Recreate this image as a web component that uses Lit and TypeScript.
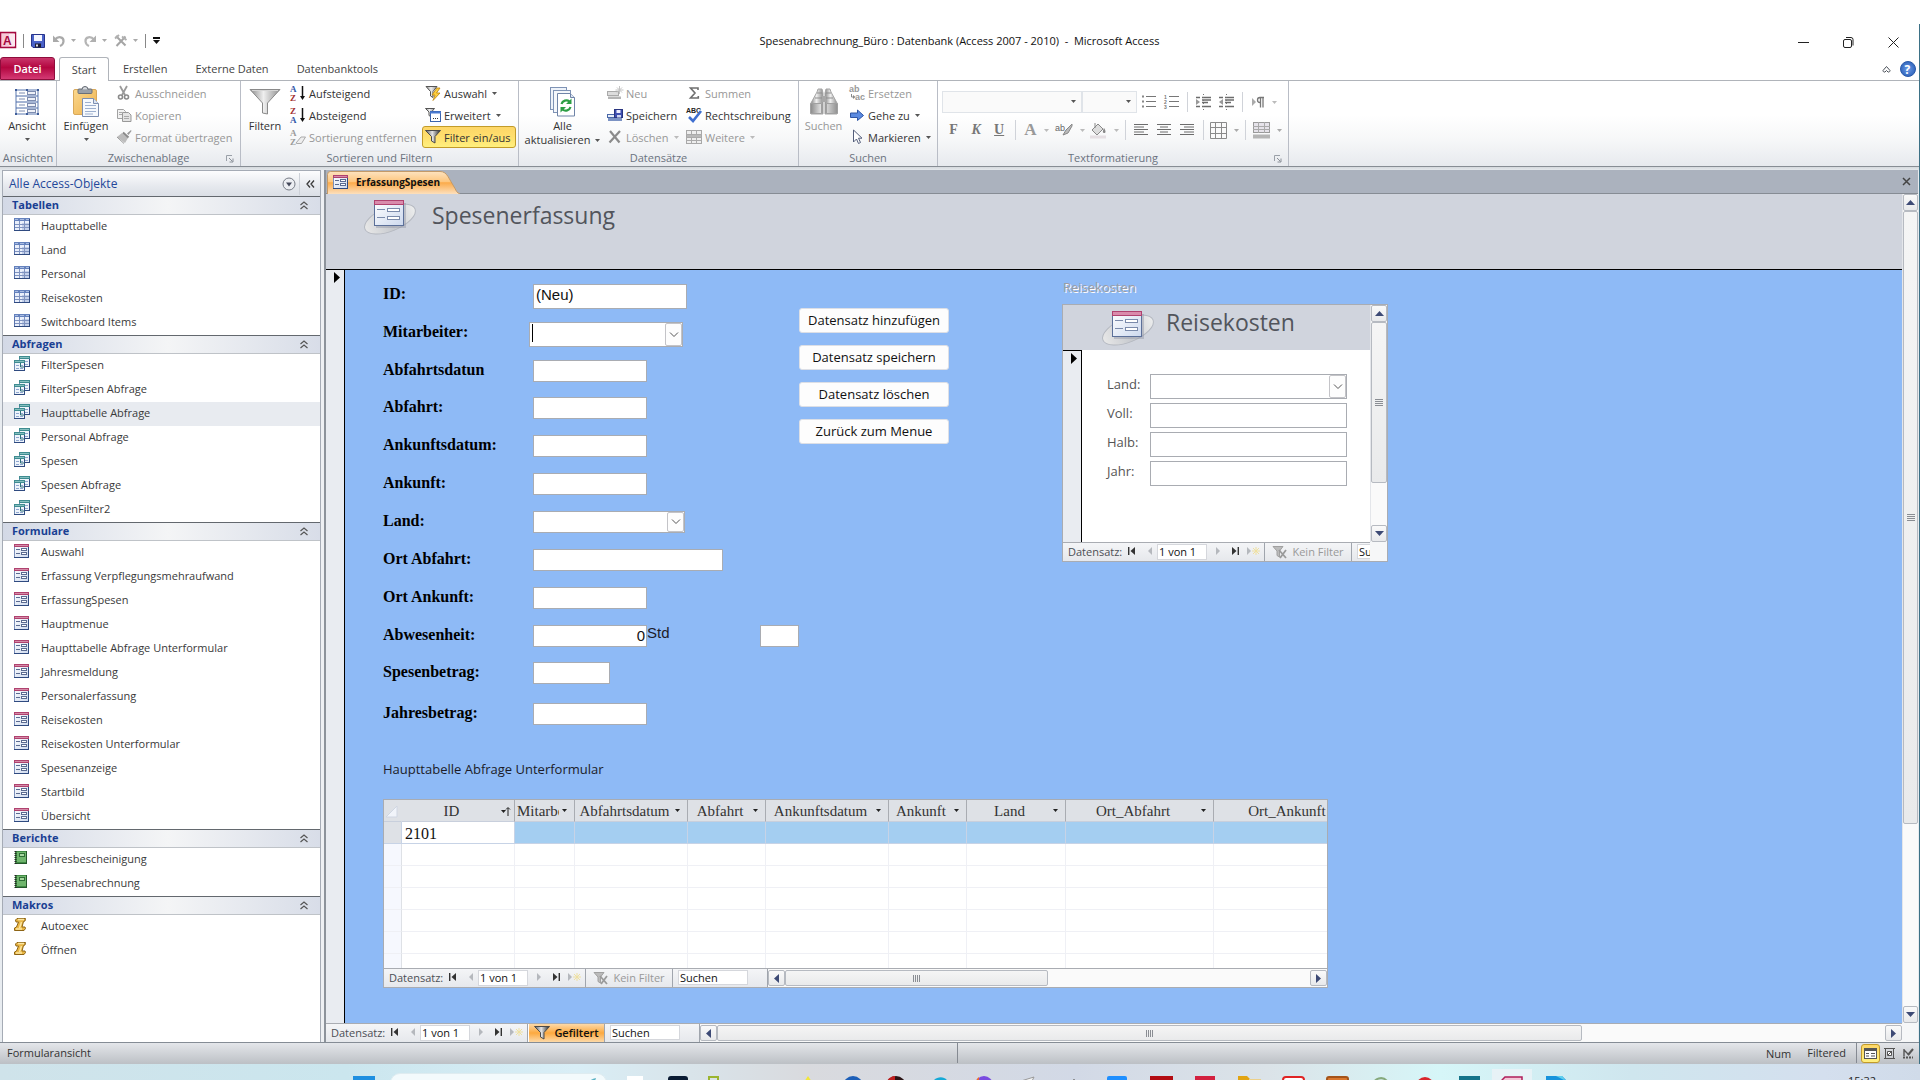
import { LitElement, html, svg, css, nothing } from "lit";
import { customElement } from "lit/decorators.js";
import { classMap } from "lit/directives/class-map.js";
import { styleMap } from "lit/directives/style-map.js";

type Icon = unknown;
const draw = (w: number, h: number, body: unknown): Icon =>
  html`<svg class="ic" width=${w} height=${h} viewBox="0 0 ${w} ${h}" aria-hidden="true">${body}</svg>`;

/* ---------- navigation pane icons ---------- */
const iconTable = draw(16, 16, svg`<rect x="0.5" y="1.5" width="15" height="12" fill="#e9effb" stroke="#5a74ad"/>
  <rect x="0" y="1" width="16" height="3" fill="#6582bd"/><path d="M8 6h8v8H8z" fill="#c3d0ea"/>
  <path d="M1 7.500h14M1 10.500h14M5.500 4v10M10.500 4v10" stroke="#7f93c0"/><path d="M1 2.500h3M6 2.500h4M12 2.500h3" stroke="#a9bce2"/>
  <path d="M0 13.500h16M15.500 2v12" stroke="#2f4a80"/>`);
const iconQuery = draw(16, 16, svg`<rect x="5.5" y="0.5" width="10" height="10" fill="#eef4fb" stroke="#6f8bb0"/><rect x="5" y="0" width="11" height="3" fill="#3f8c91"/><path d="M6 1.500h9" stroke="#86c0c0"/>
  <path d="M7 5.500h3M11 5.500h3M7 8.500h3M11 8.500h3" stroke="#8fa6cf"/><path d="M5 10.500h11M15.500 3v8" stroke="#2f4a80"/>
  <rect x="0.5" y="4.5" width="10" height="10" fill="#eef4fb" stroke="#6f8bb0"/><rect x="0" y="4" width="11" height="3" fill="#3f8c91"/><path d="M1 5.500h9" stroke="#86c0c0"/>
  <path d="M2 9.500h3M6 9.500h3M2 12.500h3M6 12.500h3" stroke="#8fa6cf"/><path d="M0 14.500h11M10.500 7v8" stroke="#2f4a80"/><path d="M6.500 7v4h4" stroke="#2d6f78" fill="none"/>`);
const formGlyph = svg`<rect x="0.5" y="1.5" width="14" height="13" fill="url(#gForm)" stroke="#7a8fba"/>
  <rect x="0" y="1" width="15" height="3" fill="#b0426f"/><path d="M1 2.500h13" stroke="#d58ba8"/>
  <path d="M2 6.500h4M2 10.500h4" stroke="#5b6b91"/><rect x="7.500" y="5.500" width="5" height="2" fill="#fff" stroke="#5b6b91"/>
  <rect x="7.500" y="9.500" width="5" height="2" fill="#fff" stroke="#5b6b91"/><path d="M0 14.500h15M14.500 4v11" stroke="#2f4a80"/>`;
const iconForm = draw(16, 16, formGlyph);
const iconReport = draw(16, 16, svg`<rect x="1" y="1" width="12" height="13" fill="#3f8a43"/><path d="M3 2h9v10H3z" fill="#6fb56c"/>
  <rect x="5.500" y="3.500" width="5" height="3" fill="#a7d6a0" stroke="#2f6e35"/><path d="M12.500 1v13M1 13.500h12" stroke="#25572b"/>
  <path d="M1.500 1v13" stroke="#222" stroke-width="2" stroke-dasharray="1 1"/>`);
const iconMacro = draw(16, 16, svg`<path d="M3 1.500h8.500l-.500 2.500-1.500 0.500L8 10h3l.500 1.500-1.500 2H.500V11L2.500 10 4.500 5H2L1.500 3z" fill="#e9b644" stroke="#8d6415"/>
  <path d="M4 2.500h6M7.500 5l-2 6M2 12h6" stroke="#fbe6a2" fill="none" stroke-width="1.500"/>`);

/* ---------- ribbon icons ---------- */
const iconView = draw(26, 28, svg`<rect x="2" y="2" width="22" height="24" fill="#fff" stroke="#5a78b0"/>
  <path d="M2 8h22M2 14h22M2 20h22" stroke="#4a6aa8"/>
  <path d="M5 5h6M5 11h6M5 17h6M5 23h6" stroke="#7d8cb0"/>
  <g fill="#eef1f8" stroke="#7d8cb0"><rect x="13.500" y="3.500" width="8" height="3"/><rect x="13.500" y="9.500" width="8" height="3"/><rect x="13.500" y="15.500" width="8" height="3"/><rect x="13.500" y="21.500" width="8" height="3"/></g>
  <g fill="#3d5c99"><rect x="1" y="1" width="2" height="2"/><rect x="12" y="1" width="2" height="2"/><rect x="23" y="1" width="2" height="2"/><rect x="1" y="25" width="2" height="2"/><rect x="12" y="25" width="2" height="2"/><rect x="23" y="25" width="2" height="2"/></g>`);
const iconPaste = draw(28, 32, svg`<rect x="1.500" y="3.500" width="23" height="25" rx="1.500" fill="url(#gClip)" stroke="#d9a95a"/>
  <rect x="6" y="3" width="14" height="4.500" rx="1" fill="#9aa0a8" stroke="#6a7079"/><path d="M10 3.500a3 3 0 0 1 6 0" fill="#d8dbe0" stroke="#5e646d"/>
  <path d="M10.500 12.500h11l5 5v13h-16z" fill="#f6f9fd" stroke="#7d8fb0"/><path d="M21.500 12.500v5h5" fill="#dce5f3" stroke="#7d8fb0"/>
  <path d="M13 16.500h6M13 19.500h11M13 22.500h11M13 25.500h11M13 28h8" stroke="#9db0cf"/>`);
const iconCut = draw(16, 16, svg`<path d="M4 1l5 9M11 1L6 10" stroke="#9a9a9a" stroke-width="1.800" fill="none"/><circle cx="4.500" cy="12" r="2" fill="none" stroke="#8a8a8a" stroke-width="1.600"/><circle cx="10.500" cy="12" r="2" fill="none" stroke="#8a8a8a" stroke-width="1.600"/>`);
const iconCopy = draw(16, 16, svg`<path d="M1.500 2.500h6l2 2v7h-8z" fill="#f2f2f2" stroke="#a2a2a2"/><path d="M6.500 5.500h6l2.500 2.500v6.500H6.500z" fill="#e4e4e4" stroke="#999"/><path d="M3 5.500h3M3 7.500h3M8 9.500h5M8 11.500h5" stroke="#aaa"/>`);
const iconBrush = draw(16, 16, svg`<path d="M15 1l-4 3.500 1.500 1.500L15.500 2z" fill="#999"/><path d="M6 4l6 5-3 5-8-6z" fill="#bcbcbc"/><path d="M7 3.500l5.500 5" stroke="#8a8a8a" stroke-width="2"/><path d="M1 8l7 6.500" stroke="#9a9a9a"/>`);
const iconFunnelBig = draw(32, 28, svg`<path d="M1 1.500h30L18.500 15v11l-5-1V15z" fill="url(#gMetal)" stroke="#8a8a8a"/><path d="M3 2.500h26" stroke="#d6d6d6"/>`);
const sortIcon = (a: string, b: string, ca: string, cb: string) => draw(16, 18, svg`<text x="0" y="8" class="az" fill=${ca}>${a}</text><text x="0" y="17" class="az" fill=${cb}>${b}</text><path d="M12.500 2v12" stroke="#111" stroke-width="1.500"/><path d="M10 12h5l-2.500 4z" fill="#111"/>`);
const iconSortClear = draw(16, 18, svg`<text x="0" y="8" class="az" fill="#9b9b9b">A</text><text x="0" y="17" class="az" fill="#9b9b9b">Z</text><path d="M6 15l5-6h4.500l-4 6.500H7z" fill="#eee" stroke="#aaa"/>`);
const iconSelect = draw(16, 16, svg`<path d="M1 1.500h11L8 6.500v6L5.500 11V6.500z" fill="url(#gMetal)" stroke="#555"/><path d="M12 3L7 10h3l-2 5.500L15 8h-3.500L15 3z" fill="#ffcf3c" stroke="#b8820e" stroke-width="0.800"/>`);
const iconAdvanced = draw(16, 16, svg`<path d="M0.500 1.500h9L6.500 5v5L4 8.500V5z" fill="url(#gMetal)" stroke="#555"/><rect x="5.500" y="4.500" width="10" height="10" fill="#fff" stroke="#3b64ad"/><path d="M5 5.500h11" stroke="#4a7ad0" stroke-width="2"/><path d="M8 11.500h1M10 11.500h1M12 11.500h1" stroke="#333"/>`);
const iconToggle = draw(16, 16, svg`<path d="M0.500 1.500h15L10 7.500V14l-3.500-2V7.500z" fill="url(#gDark)" stroke="#4b4b4b"/>`);
const iconRefresh = draw(28, 32, svg`<rect x="1.500" y="1.500" width="16" height="22" fill="#eef3fa" stroke="#7f93b5"/><rect x="4.500" y="4.500" width="17" height="22" fill="#f4f7fb" stroke="#7f93b5"/>
  <path d="M8.500 7.500h13l4 4V30h-17z" fill="#fff" stroke="#6f84a8"/><path d="M21.500 7.500v4h4" fill="#dfe7f3" stroke="#6f84a8"/>
  <path d="M12.500 18a5 5 0 0 1 8-2.500M21.500 21a5 5 0 0 1-8 2.500" fill="none" stroke="#2c9e44" stroke-width="2.200"/><path d="M22.500 12.500v5.500h-5.500zM11.500 26.500v-5.500H17z" fill="#2c9e44"/>`);
const iconNew = draw(16, 16, svg`<rect x="0.500" y="6.500" width="11" height="4" fill="#ddd" stroke="#aaa"/><path d="M1 11.500h13V14H1z" fill="#b5b5b5"/><path d="M12.500 1v8M8.500 5h8M10 2.500l5 5M15 2.500l-5 5" stroke="#c4c4c4"/>`);
const iconSave = draw(16, 16, svg`<rect x="0.500" y="7.500" width="11" height="3" fill="#e8eefa" stroke="#4a68a8"/><path d="M1 11h14v3H1z" fill="#7c93c4"/><rect x="7.500" y="2.500" width="8" height="8" fill="#3f4fb0" stroke="#2a3580"/><path d="M9.500 3h4v3h-4z" fill="#eef"/><path d="M10 8h4v2.500h-4z" fill="#cfd6f0"/>`);
const iconDelete = draw(16, 16, svg`<path d="M3 2l9.500 11.500M13 2L2.500 13.500" stroke="#8b8b8b" stroke-width="2.200" fill="none"/>`);
const iconSum = draw(16, 16, svg`<path d="M12 5V3H4.500L9 8l-4.500 5H12.300V11" fill="none" stroke="#6f6f6f" stroke-width="1.600"/>`);
const iconSpell = draw(16, 16, svg`<text x="0" y="6" class="abc">ABC</text><path d="M3 10l4 4 8-10" fill="none" stroke="#3f6fd0" stroke-width="2.600"/>`);
const iconMore = draw(16, 16, svg`<rect x="0.500" y="1.500" width="15" height="13" fill="#eee" stroke="#a8a8a8"/><path d="M0 5.500h16M0 8.500h16M0 11.500h16M5.500 1v14M10.500 1v14" stroke="#aaa"/><path d="M1 6h14v2H1z" fill="#b8b8b8"/>`);
const iconFind = draw(30, 28, svg`<path d="M8 4l1-3h4l1 4v21H2V15z" fill="url(#gMetal)" stroke="#a5a5a5"/><path d="M22 4l-1-3h-4l-1 4v21h12V15z" fill="url(#gMetal)" stroke="#a5a5a5"/>
  <path d="M1.500 15.500h11v10h-11zM17.500 15.500h11v10h-11z" fill="url(#gMetal)" stroke="#a0a0a0"/><path d="M8 5h5M17 5h5M6 10h7M17 10h7" stroke="#8f8f8f"/><rect x="13" y="8" width="4" height="6" fill="#a8a8a8"/>`);
const iconReplace = draw(16, 16, svg`<text x="0" y="7" class="ab">ab</text><text x="6" y="15" class="ab">ac</text><path d="M2.500 9v3H5" stroke="#888" fill="none"/><path d="M4 10l2.500 2L4 14z" fill="#888"/>`);
const iconGo = draw(16, 16, svg`<path d="M1.500 6h7V3L14.500 8.500 8.500 13.500v-3h-7z" fill="#5b8ae0" stroke="#2f55a4"/>`);
const iconCursor = draw(16, 16, svg`<path d="M4.500 1v12l3-3 2 4.500 2-1-2-4.300h3.500z" fill="#fff" stroke="#555f7c"/>`);
const iconBullets = draw(16, 16, svg`<path d="M5 2.500h10M5 7.500h10M5 12.500h10" stroke="#777"/><g fill="#888"><rect x="1" y="1.500" width="2" height="2"/><rect x="1" y="6.500" width="2" height="2"/><rect x="1" y="11.500" width="2" height="2"/></g>`);
const iconNumbers = draw(16, 16, svg`<path d="M5 2.500h10M5 7.500h10M5 12.500h10" stroke="#777"/><g class="num"><text x="0" y="5">1</text><text x="0" y="10">2</text><text x="0" y="15">3</text></g>`);
const indentIcon = (left: boolean) => draw(17, 16, svg`<path d="M7 3.500h9M7 6h9M7 8.500h6M7 12.500h9M1 3.500h4M1 12.500h4" stroke="#6c6c6c" stroke-width="1.300"/><path d="M8.500 0v16" stroke="#777" stroke-dasharray="1 2"/><path d=${left ? "M5 5v6L1 8z" : "M1 5v6l4-3z"} fill="#999"/>`);
const iconPara = draw(14, 16, svg`<path d="M1 4v8l4-4z" fill="#aaa"/><path d="M13 3.500H9a2.500 2.500 0 0 0 0 5M9.500 4v9.500M12 4v9.500" fill="none" stroke="#777" stroke-width="1.300"/>`);
const iconHighlight = draw(18, 16, svg`<text x="0" y="9" class="hl">ab</text><path d="M17 2l-6 6-3 5 5-2 4-7z" fill="#bbb" stroke="#888"/>`);
const iconBucket = draw(18, 18, svg`<path d="M3 9l6-6 5 5-6 6z" fill="#ddd" stroke="#888"/><path d="M6 2v5" stroke="#888"/><path d="M15 7c2 3 2 5 0 5s-1-3 0-5" fill="#888"/><path d="M1 16h16" stroke="#e5dfe3" stroke-width="3"/>`);
const alignIcon = (xs: number[][]) => draw(16, 14, svg`${xs.map((r, i) => svg`<path d="M${r[0]} ${i * 2.5 + 1.5}H${r[1]}" stroke="#6c6c6c"/>`)}`);
const iconAlignL = alignIcon([[1, 15], [1, 11], [1, 15], [1, 11], [1, 15]]);
const iconAlignC = alignIcon([[1, 15], [4, 12], [1, 15], [4, 12], [1, 15]]);
const iconAlignR = alignIcon([[1, 15], [5, 15], [1, 15], [5, 15], [1, 15]]);
const iconGrid = draw(17, 17, svg`<path d="M.5.5h16v16H.5zM5.500.5v16M11.500.5v16M.5 5.500h16M.5 11.500h16" fill="#fafafa" stroke="#8a8a8a"/>`);
const iconAltRow = draw(17, 17, svg`<rect x="0.500" y="0.500" width="16" height="10" fill="#e6e3ea" stroke="#9a9a9a"/><path d="M0 4.500h17M0 7.500h17M5.500 0v11M11.500 0v11" stroke="#aaa"/><path d="M0 14.500h17" stroke="#b5b5b5" stroke-width="4"/>`);
const iconLauncher = draw(8, 8, svg`<path d="M.5 6V.5H6" fill="none" stroke="#9aa0a8"/><path d="M3 3l3.500 3.500M7 3.500V7H3.500" fill="none" stroke="#8a9098"/>`);

/* ---------- quick access icons ---------- */
const iconAccess = draw(16, 17, svg`<rect x="0.500" y="0.500" width="15" height="15" fill="#f7c9d9" stroke="#a4093f" stroke-width="1.500"/><path d="M9 2h6v12H9z" fill="#fbe7ee"/><text x="3" y="13" class="accA">A</text>`);
const iconDisk = draw(14, 14, svg`<path d="M.5.500h13v13H2l-1.500-1.500z" fill="#4a62c8" stroke="#27338b"/><path d="M3 1h8v6H3z" fill="#f4f6ff"/><path d="M4 9.500h6v4H4z" fill="#1c1c30"/><path d="M5 10.500h2v2H5z" fill="#dde"/>`);
const iconUndo = draw(14, 14, svg`<path d="M3 5.500C6 2 12 2.500 11.500 7.500c-.2 2-1 3.500-3.500 4.500" fill="none" stroke="#aaa" stroke-width="2.200"/><path d="M1 1.500V8h6.500z" fill="#aaa"/>`);
const iconRedo = draw(14, 14, svg`<path d="M11 5.500C8 2 2 2.500 2.500 7.500c.2 2 1 3.500 3.500 4.500" fill="none" stroke="#b5b5b5" stroke-width="2.200"/><path d="M13 1.500V8H6.500z" fill="#b0b0b0"/>`);
const iconTools = draw(14, 14, svg`<path d="M2 2l9.500 9.500M11.500 2.500L2.500 12" stroke="#a5a5a5" stroke-width="2"/><path d="M8 2.500l4.500 3.500M1 4.500L5 1" stroke="#b0b0b0" stroke-width="2"/>`);

/* ---------- small shapes ---------- */
const caret = (c = "#555") => draw(5, 3, svg`<path d="M0 0h5L2.500 3z" fill=${c}/>`);
const caretWide = draw(7, 4, svg`<path d="M0 0h7L3.500 4z" fill="#111"/>`);
const chevron = draw(10, 6, svg`<path d="M1 .5l4 4 4-4" fill="none" stroke="#555"/>`);
const dblUp = draw(8, 9, svg`<path d="M.5 4L4 1l3.500 3M.5 8L4 5l3.500 3" fill="none" stroke="#555" stroke-width="1.200"/>`);
const logo = draw(56, 38, svg`<ellipse cx="28" cy="21" rx="27" ry="12" transform="rotate(-22 28 21)" fill="url(#gEll)" stroke="#b4b8c0"/>
  <path d="M14 29h29V5" stroke="#8a8fa0" stroke-opacity="0.400" stroke-width="2" fill="none"/>
  <rect x="12.500" y="2.500" width="29" height="25" fill="url(#gForm)" stroke="#5c7099"/><rect x="12" y="2" width="30" height="5" fill="#b0426f"/><rect x="13" y="3" width="28" height="3" fill="#d98bab"/>
  <path d="M15 11.500h8M15 19.500h8" stroke="#7b8bab"/><rect x="25.500" y="10.500" width="12" height="3" fill="#fff" stroke="#7b8bab"/><rect x="25.500" y="18.500" width="12" height="3" fill="#fff" stroke="#7b8bab"/>`);
const noFilter = draw(16, 14, svg`<path d="M1 1.500h10L7.500 6v6L5 10.500V6z" fill="#bbb" stroke="#a0a0a0"/><path d="M7 5l7 8M14 5l-6 8" stroke="#9a9a9a" stroke-width="1.800"/>`);
const tri = (d: "up" | "down" | "left" | "right") =>
  draw(9, 9, svg`<path d=${{ up: "M0 7l4.500-5L9 7z", down: "M0 2l4.500 5L9 2z", left: "M7 0L2 4.500 7 9z", right: "M2 0l5 4.500L2 9z" }[d]} fill="#3d4a75"/>`);

const cmd = (icon: Icon, text: string, o: { off?: boolean; drop?: boolean; on?: boolean } = {}) => html`
  <button class=${classMap({ cmd: true, on: !!o.on })} ?disabled=${o.off}>${icon}<span>${text}</span>${o.drop ? caret(o.off ? "#bbb" : "#555") : nothing}</button>`;

const GROUPS: { title: string; icon: Icon; items: string[] }[] = [
  { title: "Tabellen", icon: iconTable, items: ["Haupttabelle", "Land", "Personal", "Reisekosten", "Switchboard Items"] },
  { title: "Abfragen", icon: iconQuery, items: ["FilterSpesen", "FilterSpesen Abfrage", "Haupttabelle Abfrage", "Personal Abfrage", "Spesen", "Spesen Abfrage", "SpesenFilter2"] },
  { title: "Formulare", icon: iconForm, items: ["Auswahl", "Erfassung Verpflegungsmehraufwand", "ErfassungSpesen", "Hauptmenue", "Haupttabelle Abfrage Unterformular", "Jahresmeldung", "Personalerfassung", "Reisekosten", "Reisekosten Unterformular", "Spesenanzeige", "Startbild", "Übersicht"] },
  { title: "Berichte", icon: iconReport, items: ["Jahresbescheinigung", "Spesenabrechnung"] },
  { title: "Makros", icon: iconMacro, items: ["Autoexec", "Öffnen"] },
];
const HOVERED = "Haupttabelle Abfrage";

type Field = { id: string; label: string; size: string; value?: string; combo?: boolean };
const FIELDS: Field[] = [
  { id: "id", label: "ID:", size: "tall", value: "(Neu)" },
  { id: "mitarbeiter", label: "Mitarbeiter:", size: "tall active", combo: true },
  { id: "abfahrtsdatum", label: "Abfahrtsdatun", size: "std" },
  { id: "abfahrt", label: "Abfahrt:", size: "std" },
  { id: "ankunftsdatum", label: "Ankunftsdatum:", size: "std" },
  { id: "ankunft", label: "Ankunft:", size: "std" },
  { id: "land", label: "Land:", size: "wide", combo: true },
  { id: "ortabfahrt", label: "Ort Abfahrt:", size: "long" },
  { id: "ortankunft", label: "Ort Ankunft:", size: "std" },
  { id: "abwesenheit", label: "Abwesenheit:", size: "std num", value: "0" },
  { id: "spesenbetrag", label: "Spesenbetrag:", size: "short" },
  { id: "jahresbetrag", label: "Jahresbetrag:", size: "std" },
];

const COLS: { name: string; w: number; sorted?: boolean }[] = [
  { name: "ID", w: 113, sorted: true }, { name: "Mitarbeiter", w: 60 }, { name: "Abfahrtsdatum", w: 113 }, { name: "Abfahrt", w: 78 },
  { name: "Ankunftsdatum", w: 123 }, { name: "Ankunft", w: 78 }, { name: "Land", w: 99 }, { name: "Ort_Abfahrt", w: 148 }, { name: "Ort_Ankunft", w: 160 },
];

/* Shapes of the taskbar programs, each drawn in a 24px tile */
const TASKS: unknown[] = [
  svg`<rect x="4" y="0" width="16" height="20" fill="#fff"/>`,
  svg`<rect x="1" y="0" width="20" height="20" rx="3" fill="#0a1b33"/>`,
  svg`<path d="M-2 12V1h9v11" fill="none" stroke="#9bb52f" stroke-width="2"/>`,
  nothing,
  svg`<path d="M5 6l4-6 4 6z" fill="#f2e63a"/>`,
  svg`<circle cx="10" cy="10" r="10" fill="#1d5fb8"/>`,
  svg`<circle cx="9" cy="10" r="10" fill="#2b1416"/><path d="M0 5a10 10 0 0 1 8-5v5z" fill="#c02020"/>`,
  svg`<path d="M0 12C0 0 14-2 17 6v6z" fill="#16a9d6"/>`,
  svg`<circle cx="9" cy="9" r="9" fill="#7a4be0"/><path d="M1 5a9 9 0 0 1 3-4v5z" fill="#f06a2a"/>`,
  svg`<path d="M2 5l13-4-3 6z" fill="#f4f4f4" stroke="#999"/>`,
  svg`<path d="M11 3v4" stroke="#777" stroke-width="1.500"/>`,
  svg`<rect x="0" y="0" width="20" height="20" rx="2" fill="#1f8fff"/>`,
  svg`<rect x="-1" y="0" width="23" height="20" fill="#b30c12"/>`,
  svg`<rect x="0" y="0" width="20" height="20" fill="#d3203f"/>`,
  svg`<path d="M-1 0h9l3 3h11v10H-1z" fill="#e2a411"/><path d="M10 3h12v6H10z" fill="#ecd089"/>`,
  svg`<rect x="0" y="1" width="21" height="20" rx="3" fill="#fff" stroke="#e02424" stroke-width="2"/>`,
  svg`<rect x="0" y="1" width="21" height="20" rx="2" fill="#d9772e" stroke="#a4541a" stroke-width="2"/>`,
  svg`<path d="M2 9a8 8 0 0 1 14-4" fill="none" stroke="#86a97c" stroke-width="2"/>`,
  svg`<circle cx="10" cy="10" r="9" fill="#d9252b"/>`,
  svg`<rect x="0" y="0" width="21" height="20" fill="#14748a"/>`,
  svg`<path d="M2 1h17v14H-1V4z" fill="#f3c6d7" stroke="#b01d5a" stroke-width="1.500"/><path d="M4 5h8v6H4z" fill="#b01d5a"/>`,
  svg`<path d="M-1 8V0h16l4 4v8H-1z" fill="#1793dc"/><path d="M9 0h6l4 5z" fill="#5fd0ee"/>`,
];

@customElement("app-root")
export class AppRoot extends LitElement {
  static styles = css`
    :host { display: flex; flex-direction: column; height: 100vh; min-height: 100vh; background: #fff; overflow: hidden;
      font-family: "Open Sans", "Noto Sans", sans-serif; font-size: 11px; color: #333; }
    * { box-sizing: border-box; }
    button, input, select { font: inherit; color: inherit; margin: 0; padding: 0; border: 0; background: none; border-radius: 0; outline: none; }
    input { min-width: 0; }
    .ic { display: block; flex: none; overflow: visible; }
    .defs { position: absolute; }
    .az { font: bold 9px "Liberation Serif", serif; }
    .abc { font: bold 7px "Liberation Sans", sans-serif; fill: #222; }
    .ab { font: bold 9px "Liberation Sans", sans-serif; fill: #999; }
    .num { font: bold 5px "Liberation Sans", sans-serif; fill: #777; }
    .hl { font: 9px "Liberation Sans", sans-serif; fill: #666; }
    .accA { font: bold 12px "Liberation Sans", sans-serif; fill: #a4093f; }

    .window { margin-top: 24px; flex: 1; min-height: 0; display: flex; flex-direction: column; border-right: 1px solid #3d7186; }

    /* title bar */
    .title { height: 33px; flex: none; display: grid; grid-template-columns: 1fr auto 1fr; align-items: center; padding-top: 5px; color: #111; }
    .title h1 { margin: 0; font-size: 11px; font-weight: 400; line-height: 16px; padding-bottom: 4px; white-space: pre; }
    .qat { display: flex; align-items: center; padding-bottom: 5px; gap: 7px; }
    .qat button { display: flex; align-items: center; gap: 5px; }
    .bar { width: 1px; height: 14px; background: #888; }
    .qat .custom { display: flex; flex-direction: column; align-items: center; border-top: 2px solid #111; padding-top: 1px; gap: 0; }
    .wins { display: flex; justify-content: flex-end; padding: 0 20px 1px 0; gap: 34px; }
    /* ribbon tabs */
    .tabs { height: 24px; flex: none; display: flex; align-items: stretch; border-bottom: 1px solid #b0b4ba; color: #444; }
    .tabs button { height: 24px; padding: 0 14px 1px; white-space: nowrap; }
    .tabs .file { width: 55px; height: 23px; padding: 0; color: #fff; font-weight: 600; background: linear-gradient(#c9346a, #b3063f 45%, #d43a74); border: 1px solid #8e0d3c; border-radius: 3px 3px 0 0; margin-right: 4px; }
    .tabs .sel { width: 50px; padding: 0; border: 1px solid #b0b4ba; border-bottom: 0; border-radius: 3px 3px 0 0; background: #fff; }
    .tabs .r { margin-left: auto; display: flex; align-items: center; gap: 9px; padding-right: 3px; }
    .tabs .r button { height: auto; padding: 0; }
    /* ribbon */
    .ribbon { height: 86px; flex: none; display: flex; border-bottom: 1px solid #878d94; background: linear-gradient(#fff 40%, #f6f7f8 70%, #e7eaee); }
    .grp { display: flex; flex-direction: column; border-right: 1px solid #b9bdc6; }
    .tools { height: 68px; padding-top: 1px; display: flex; }
    .cap { position: relative; text-align: center; line-height: 17px; color: #6b7380; }
    .cap .ic { position: absolute; right: 6px; bottom: 3px; }
    .g-view { width: 57px; } .g-clip { width: 184px; } .g-sort { width: 278px; } .g-data { width: 280px; } .g-find { width: 139px; } .g-text { width: 351px; }
    .col { display: flex; flex-direction: column; }
    .big { display: flex; flex-direction: column; align-items: center; padding-top: 3px; line-height: 14px; white-space: nowrap; }
    .big .pic { height: 34px; display: flex; align-items: center; }
    .big > .ic { margin-top: 5px; }
    .big .line { display: flex; align-items: center; gap: 5px; }
    .big:disabled, .cmd:disabled { color: #979797; }
    .cmd { height: 22px; display: flex; align-items: center; gap: 3px; padding-left: 1px; white-space: nowrap; text-align: left; }
    .cmd .ic + span + .ic { margin-left: 2px; }
    .cmd.on { border: 1px solid #c29b29; border-radius: 3px; background: linear-gradient(#fdd667, #ffdf6e 50%, #fff07e); margin-left: -2px; padding: 0 4px 0 2px; }
    .g-view .big { width: 54px; } .g-clip .big { width: 58px; } .g-sort .big { width: 48px; } .g-data .big { width: 87px; } .g-find .big { width: 49px; }
    .w132 { width: 135px; } .w81 { width: 79px; }
    .text { flex-direction: column; padding: 10px 4px 0 4px; }
    .trow { display: flex; align-items: center; height: 22px; color: #777; }
    .trow + .trow { margin-top: 6px; }
    .trow button { display: flex; align-items: center; justify-content: center; gap: 7px; height: 22px; }
    .trow .sep { width: 1px; height: 20px; margin: 0 4px; background: #d0d3d9; }
    .b22 { width: 23px; } .b35 { width: 34px; }
    .combo { position: relative; display: block; height: 22px; border: 1px solid #e0e4e9; background: #fafafa; }
    .combo select { appearance: none; width: 100%; height: 100%; }
    .combo .ic { position: absolute; right: 5px; top: 8px; pointer-events: none; }
    .f1 { width: 140px; } .f2 { width: 55px; }
    .serif { font: bold 14px "Liberation Serif", serif; } .serif.i { font-style: italic; } .serif.u { text-decoration: underline; } .serif.pale { color: #999; font-size: 17px; }

    /* workspace */
    .work { flex: 1; min-height: 0; display: flex; padding: 3px 1px 0 2px; background: linear-gradient(#d5d9dd, #e8ecf0 4px, #e8ecf0); }
    .nav { width: 319px; flex: none; display: flex; flex-direction: column; background: #fff; border: 1px solid #a5abb5; border-bottom: 0; }
    .navhead { height: 25px; flex: none; display: flex; align-items: center; padding-left: 6px; font-size: 12px; color: #24489a; background: linear-gradient(#fdfdfe, #e6e9ee 60%, #dbdfe6); }
    .navhead span { flex: 1; }
    .navhead button { height: 22px; width: 18px; display: flex; align-items: center; justify-content: center; }
    .navhead button + button { border-left: 1px solid #cdd1d8; margin-left: 1px; width: 21px; }
    .gh { width: 100%; height: 19px; display: flex; align-items: center; justify-content: space-between; padding: 0 12px 2px 9px; border-top: 1px solid #63686e; border-bottom: 1px solid #bfc3c8; background: linear-gradient(90deg, #d3d9e6, #f4f5f6 52%, #d8dde8); font-size: 11px; font-weight: 700; color: #1a3f93; }
    .gh .ic { margin-top: 2px; }
    .list { list-style: none; margin: 0; padding: 0; }
    .list a { display: flex; align-items: center; height: 24px; padding: 0 0 3px 11px; gap: 11px; color: #3a3a3a; text-decoration: none; }
    .list .ic { width: 16px; margin-top: -2px; }
    .list .hov { background: #e8ebf0; }
    .split { width: 5px; flex: none; border-right: 2px solid #8d939b; background: #eef0f3; }

    .doc { flex: 1; min-width: 0; display: flex; flex-direction: column; }
    .doctabs { height: 24px; flex: none; display: flex; justify-content: space-between; align-items: center; background: #abb2be; border-bottom: 1px solid #868c94; padding-right: 7px; }
    .doctab { position: relative; width: 134px; height: 24px; display: flex; align-items: center; gap: 7px; padding-left: 7px; font-weight: 700; font-size: 10px; color: #111; }
    .doctab > svg.shape { position: absolute; left: 1px; top: 1px; }
    .doctab > .t { position: relative; }
    .doctab > .ic { position: relative; }
    .main { flex: 1; min-height: 0; display: grid; grid-template-columns: 1fr 16px; grid-template-rows: 1fr 19px; }
    .form { min-width: 0; min-height: 0; overflow: hidden; display: flex; flex-direction: column; }
    .fhead { height: 76px; flex: none; background: #d0d4dd; border-bottom: 1px solid #000; display: flex; align-items: flex-start; gap: 14px; padding: 4px 0 0 36px; }
    .fhead h2, .shead h2 { margin: 0; font-size: 23px; line-height: 34px; font-weight: 400; color: #52555c; }
    .fbody { flex: 1; min-height: 0; display: flex; }
    .selcol { width: 19px; flex: none; background: #e9ecf1; border-right: 1px solid #000; padding: 2px 0 0 8px; }
    .canvas { flex: 1; min-width: 0; background: #8ebaf6; padding: 8px 0 0 38px; color: #1c1c28; }
    .top { display: flex; align-items: flex-start; }
    .fields { width: 416px; padding-top: 6px; display: grid; grid-template-rows: repeat(2, 38px) 37px repeat(6, 38px) 37px 41px 37px; }
    .frow { display: flex; align-items: flex-start; }
    .frow > label { width: 150px; font: bold 16px/20px "Liberation Serif", serif; color: #000; }
    .frow.active > label { width: 146px; }
    .box { display: block; border: 1px solid #a9acb2; background: #fff; color: #111; height: 22px; width: 114px; padding: 0 2px 2px; font: 15px "Liberation Sans", sans-serif; }
    .tall .box { height: 25px; width: 154px; padding-bottom: 4px; } .wide .box { width: 152px; } .long .box { width: 190px; } .short .box { width: 77px; }
    .num .box { text-align: right; padding-right: 1px; }
    .num .box.extra { width: 39px; }
    .unit { width: 113px; font: 15px/16px "Liberation Sans", sans-serif; }
    .cb { position: relative; display: block; }
    .cb select { appearance: none; }
    .cb .ar { position: absolute; right: 1px; top: 1px; bottom: 1px; width: 17px; display: flex; align-items: center; justify-content: center; border: 1px solid #c4c4c8; border-radius: 2px; background: #fdfdfd; pointer-events: none; }
    .active .box { background: linear-gradient(#000, #000) 2px 1px / 1px 18px no-repeat #fff; }
    .btns { width: 150px; padding-top: 30px; display: flex; flex-direction: column; gap: 12px; }
    .btns button { height: 25px; border: 1px solid #dcdfe6; border-radius: 3px; background: #fdfdfd; font-size: 13px; line-height: 18px; padding-bottom: 2px; color: #111; white-space: nowrap; }
    .sub { width: 326px; margin-left: 113px; }
    .sub h3 { margin: 0 0 8px 1px; font-size: 13px; line-height: 18px; font-weight: 400; color: #9c9ca4; text-shadow: 1px 1px 0 #fff; }
    .subform { border: 1px solid #a9acb2; background: #fff; display: grid; grid-template-columns: 1fr 17px; grid-template-rows: 237px 19px; }
    .shead { height: 45px; background: #d0d4dd; display: flex; align-items: flex-start; gap: 10px; padding: 4px 0 0 37px; }
    .shead h2 { line-height: 27px; }
    .sbody { height: 192px; display: flex; }
    .sbody .selcol { border-top: 1px solid #000; }
    .sf { flex: 1; padding: 24px 23px 0 25px; display: flex; flex-direction: column; gap: 4px; }
    .sf .r { display: flex; }
    .sf label.l { width: 43px; font-size: 13px; line-height: 20px; color: #555; }
    .sf .f { flex: 1; }
    .sf .box { height: 25px; width: 100%; }
    .subform .corner, .main .corner { background: #f6f7f8; }
    .sub-cap { margin-top: 20px; font-size: 13px; line-height: 18px; }
    .sheet { width: 945px; margin-top: 21px; border: 1px solid #a9acb2; background: #fff; }
    .grid { height: 168px; overflow: hidden; }
    table { border-collapse: separate; border-spacing: 0; table-layout: fixed; width: 990px; }
    th { height: 22px; padding: 1px 0 0; background: #dee1e6; border-right: 1px solid #a9acb2; border-bottom: 1px solid #c8cfdc; font: 15px "Liberation Serif", serif; color: #333; }
    th .h { display: flex; align-items: center; padding: 0 4px 0 2px; gap: 2px; }
    th .n { flex: 1; min-width: 0; overflow: hidden; white-space: nowrap; }
    th.c0, td.c0 { border-right-color: #dee1e6; }
    td { height: 22px; padding: 2px 3px 0; border-right: 1px solid #eff0f5; border-bottom: 1px solid #eff0f5; font: 16px/19px "Liberation Serif", serif; color: #111; }
    td.c0 { background: #f6f8fe; padding: 0; }
    tr.cur td { background: #a4cef1; border-color: #c7d3e6; }
    tr.cur td.c0 { background: #dee1e6; } tr.cur td.v { background: #fff; }

    /* record navigator */
    .rec { display: flex; min-width: 0; height: 19px; overflow: hidden; background: linear-gradient(#f4f5f7, #e6e8ec); border-top: 1px solid #a9acb2; color: #4c4f55; white-space: nowrap; }
    .rec .lead { width: 202px; flex: none; display: flex; align-items: center; padding: 0 0 1px 5px; border-right: 1px solid #a0a5ad; }
    .rec .lead label { width: 60px; }
    .rec .pos { width: 50px; height: 16px; border: 1px solid #d5d7dc; background: #fff; color: #111; padding: 0 0 1px 1px; margin: 0 9px 0 5px; }
    .rec button { display: flex; align-items: center; padding-bottom: 1px; }
    .rec .prev { margin-left: 13px; } .rec .last { margin-left: 12px; } .rec .new { margin-left: 8px; }
    .rec .flt { width: 87px; flex: none; justify-content: center; gap: 4px; border-right: 1px solid #a0a5ad; color: #999; }
    .rec .flt.on { width: 77px; color: #111; font-weight: 600; background: linear-gradient(#fdd9a8, #fca93f 50%, #fdd9a8); border-left: 1px solid #fff; }
    .rec .sw { width: 95px; flex: none; padding: 1px 0 0 5px; border-right: 1px solid #a0a5ad; }
    .rec .sw input { display: block; width: 70px; height: 15px; border: 1px solid #d5d7dc; background: #fff; color: #111; padding: 0 0 1px 1px; }

    .hs { flex: 1; min-width: 0; display: flex; padding: 1px 0; background: #fafafa; }
    .vs { display: flex; flex-direction: column; background: #fafafa; border-left: 1px solid #e4e6ea; }
    .hs button, .vs button { flex: none; display: flex; align-items: center; justify-content: center; padding: 0; border: 1px solid #b6bac1; border-radius: 2px; background: linear-gradient(#fafafa, #e8e9eb); }
    .hs button { width: 17px; } .vs button { height: 17px; }
    .thumb { flex: none; display: flex; align-items: center; justify-content: center; border: 1px solid #b6bac1; border-radius: 2px; background: linear-gradient(#f5f5f5, #e9eaeb); }
    .rest { flex: 1; }

    /* status bar and taskbar */
    .status { height: 22px; flex: none; display: flex; align-items: center; border-top: 1px solid #858c95; background: linear-gradient(#e4e6ea, #bcc0c5); padding: 0 1px 1px 7px; color: #333; }
    .status .a { width: 951px; border-right: 1px solid #858a92; line-height: 20px; }
    .status .n { margin-left: auto; padding-right: 16px; }
    .status .f { padding-right: 10px; border-right: 1px solid #858a92; line-height: 20px; margin-right: 4px; }
    .status button { width: 19px; height: 19px; display: flex; align-items: center; justify-content: center; }
    .status .on { border: 1px solid #c29b29; border-radius: 3px; background: linear-gradient(#fdd667, #fff07e); }
    .taskbar { height: 16px; flex: none; overflow: hidden; display: flex; background: linear-gradient(90deg, #cfe3ea, #cbe6ee 18%, #d9eef6 30%, #d9dade 42%, #d2d9e6 56%, #dbe3e8 66%, #d6f6f8 75%, #cfe6ee 85%, #d4dfee 95%, #d0dbe9); }
    .start { width: 22px; margin: 12px 15px 0 353px; height: 10px; background: #1f8fe0; }
    .pill { width: 217px; height: 20px; margin: 9px 5px 0 0; border-radius: 12px; background: #f3fafc; border: 1px solid #dfecf0; }
    .pill .ic { margin: 4px 0 0 194px; }
    .task { width: 44px; flex: none; padding: 12px 0 0 11px; }
    .task.cur { background: linear-gradient(#e7f2f6, #e7f2f6) 0 5px / 40px 11px no-repeat; }
    .clock { margin-left: auto; padding: 10px 44px 0 0; color: #222; line-height: 14px; }
  `;

  private hscroll(thumb: number, grow = false) {
    return html`<div class="hs"><button aria-label="Nach links">${tri("left")}</button>
      <div class="thumb" style=${styleMap({ width: grow ? `${thumb}%` : `${thumb}px` })}>${draw(8, 7, svg`<path d="M.5 0v7M2.500 0v7M4.500 0v7M6.500 0v7" stroke="#8a8d93"/>`)}</div>
      <div class="rest"></div><button aria-label="Nach rechts">${tri("right")}</button></div>`;
  }

  private vscroll(thumb: number) {
    return html`<div class="vs"><button aria-label="Nach oben">${tri("up")}</button>
      <div class="thumb" style=${styleMap({ height: `${thumb}%` })}>${draw(8, 8, svg`<path d="M0 .5h8M0 2.500h8M0 4.500h8M0 6.500h8" stroke="#8a8d93"/>`)}</div>
      <div class="rest"></div><button aria-label="Nach unten">${tri("down")}</button></div>`;
  }

  private recnav(id: string, filtered: boolean, scroll: unknown = nothing) {
    return html`<div class="rec">
      <div class="lead"><label for="pos-${id}">Datensatz:</label>
        <button aria-label="Erster">${draw(7, 8, svg`<path d="M.7 0v8" stroke="#333" stroke-width="1.400"/><path d="M7 0v8L2.500 4z" fill="#333"/>`)}</button>
        <button class="prev" aria-label="Vorheriger">${draw(4, 8, svg`<path d="M4 0v8L0 4z" fill="#b5b8bd"/>`)}</button>
        <input class="pos" id="pos-${id}" value="1 von 1" />
        <button aria-label="Nächster">${draw(4, 8, svg`<path d="M0 0v8l4-4z" fill="#b5b8bd"/>`)}</button>
        <button class="last" aria-label="Letzter">${draw(7, 8, svg`<path d="M6.300 0v8" stroke="#333" stroke-width="1.400"/><path d="M0 0v8l4.500-4z" fill="#333"/>`)}</button>
        <button class="new" aria-label="Neuer Datensatz">${draw(13, 8, svg`<path d="M0 0v8l4-4z" fill="#b5b8bd"/><path d="M9 0v8M5 4h8M6 1l6 6M12 1L6 7" stroke="#efe0a0"/>`)}</button>
      </div>
      ${filtered ? html`<button class="flt on">${iconToggle}Gefiltert</button>` : html`<button class="flt" disabled>${noFilter}Kein Filter</button>`}
      <div class="sw"><input aria-label="Suchen" value="Suchen" /></div>${scroll}</div>`;
  }

  private field(f: Field) {
    return html`<div class="frow ${f.size}"><label for=${f.id}>${f.label}</label>
      ${f.combo
        ? html`<div class="cb"><select class="box" id=${f.id}><option></option></select><span class="ar">${chevron}</span></div>`
        : html`<input class="box" id=${f.id} .value=${f.value ?? ""} />`}
      ${f.id === "abwesenheit" ? html`<span class="unit">Std</span><input class="box extra" aria-label="Stunden" />` : nothing}</div>`;
  }

  private ribbon() {
    return html`<div class="ribbon">
      <section class="grp g-view"><div class="tools"><button class="big"><span class="pic">${iconView}</span>Ansicht${caret()}</button></div><div class="cap">Ansichten</div></section>
      <section class="grp g-clip"><div class="tools"><button class="big"><span class="pic">${iconPaste}</span>Einfügen${caret()}</button>
        <div class="col">${cmd(iconCut, "Ausschneiden", { off: true })}${cmd(iconCopy, "Kopieren", { off: true })}${cmd(iconBrush, "Format übertragen", { off: true })}</div></div>
        <div class="cap">Zwischenablage${iconLauncher}</div></section>
      <section class="grp g-sort"><div class="tools"><button class="big"><span class="pic">${iconFunnelBig}</span>Filtern</button>
        <div class="col w132">${cmd(sortIcon("A", "Z", "#3358a8", "#a33030"), "Aufsteigend")}${cmd(sortIcon("Z", "A", "#a33030", "#3358a8"), "Absteigend")}${cmd(iconSortClear, "Sortierung entfernen", { off: true })}</div>
        <div class="col">${cmd(iconSelect, "Auswahl", { drop: true })}${cmd(iconAdvanced, "Erweitert", { drop: true })}${cmd(iconToggle, "Filter ein/aus", { on: true })}</div></div>
        <div class="cap">Sortieren und Filtern</div></section>
      <section class="grp g-data"><div class="tools"><button class="big"><span class="pic">${iconRefresh}</span>Alle<span class="line">aktualisieren${caret()}</span></button>
        <div class="col w81">${cmd(iconNew, "Neu", { off: true })}${cmd(iconSave, "Speichern")}${cmd(iconDelete, "Löschen", { off: true, drop: true })}</div>
        <div class="col">${cmd(iconSum, "Summen", { off: true })}${cmd(iconSpell, "Rechtschreibung")}${cmd(iconMore, "Weitere", { off: true, drop: true })}</div></div>
        <div class="cap">Datensätze</div></section>
      <section class="grp g-find"><div class="tools"><button class="big" disabled><span class="pic">${iconFind}</span>Suchen</button>
        <div class="col">${cmd(iconReplace, "Ersetzen", { off: true })}${cmd(iconGo, "Gehe zu", { drop: true })}${cmd(iconCursor, "Markieren", { drop: true })}</div></div>
        <div class="cap">Suchen</div></section>
      <section class="grp g-text"><div class="tools text">
        <div class="trow">
          <label class="combo f1"><select aria-label="Schriftart"><option></option></select>${caret()}</label>
          <label class="combo f2"><select aria-label="Schriftgrad"><option></option></select>${caret()}</label>
          <button class="b22" aria-label="Aufzählung">${iconBullets}</button><button class="b22" aria-label="Nummerierung">${iconNumbers}</button><span class="sep"></span>
          <button class="b22" aria-label="Einzug verkleinern">${indentIcon(false)}</button><button class="b22" aria-label="Einzug vergrößern">${indentIcon(true)}</button><span class="sep"></span>
          <button class="b35" aria-label="Textrichtung">${iconPara}${caret("#bbb")}</button>
        </div>
        <div class="trow">
          <button class="b22 serif">F</button><button class="b22 serif i">K</button><button class="b22 serif u">U</button><span class="sep"></span>
          <button class="b35 serif pale">A${caret("#bbb")}</button><button class="b35" aria-label="Hervorheben">${iconHighlight}${caret("#bbb")}</button><button class="b35" aria-label="Füllfarbe">${iconBucket}${caret("#bbb")}</button><span class="sep"></span>
          <button class="b22" aria-label="Links">${iconAlignL}</button><button class="b22" aria-label="Zentriert">${iconAlignC}</button><button class="b22" aria-label="Rechts">${iconAlignR}</button><span class="sep"></span>
          <button class="b35" aria-label="Gitternetz">${iconGrid}${caret("#aaa")}</button><span class="sep"></span><button class="b35" aria-label="Zeilenfarbe">${iconAltRow}${caret("#aaa")}</button>
        </div></div><div class="cap">Textformatierung${iconLauncher}</div></section>
    </div>`;
  }

  render() {
    return html`
      <svg class="defs" width="0" height="0" aria-hidden="true"><defs>
        <linearGradient id="gForm" x1="0" y1="0" x2="1" y2="1"><stop offset="0" stop-color="#fff"/><stop offset="1" stop-color="#cdd9ee"/></linearGradient>
        <linearGradient id="gClip" x1="0" y1="0" x2="1" y2="1"><stop offset="0" stop-color="#fbd88e"/><stop offset="1" stop-color="#edb14c"/></linearGradient>
        <linearGradient id="gMetal"><stop offset="0" stop-color="#8a8a8a"/><stop offset="0.450" stop-color="#efefef"/><stop offset="1" stop-color="#909090"/></linearGradient>
        <linearGradient id="gDark"><stop offset="0" stop-color="#555"/><stop offset="0.450" stop-color="#e5e5e5"/><stop offset="1" stop-color="#222"/></linearGradient>
        <linearGradient id="gEll"><stop offset="0" stop-color="#e8e8e8"/><stop offset="0.500" stop-color="#c6c9ce"/><stop offset="1" stop-color="#eceded"/></linearGradient>
        <linearGradient id="gTab" x2="0" y2="1"><stop offset="0" stop-color="#fde3c0"/><stop offset="0.450" stop-color="#fdc67e"/><stop offset="0.500" stop-color="#fbab4b"/><stop offset="1" stop-color="#fde0bd"/></linearGradient>
        <radialGradient id="gHelp"><stop offset="0" stop-color="#6e9de8"/><stop offset="1" stop-color="#3266bd"/></radialGradient>
      </defs></svg>
      <div class="window">
        <header class="title">
          <div class="qat">${iconAccess}<span class="bar"></span><button aria-label="Speichern">${iconDisk}</button>
            <button aria-label="Rückgängig">${iconUndo}${caret("#aaa")}</button><button aria-label="Wiederholen">${iconRedo}${caret("#aaa")}</button>
            <button aria-label="Werkzeuge">${iconTools}${caret("#aaa")}</button><span class="bar"></span><button class="custom" aria-label="Anpassen">${caretWide}</button></div>
          <h1>Spesenabrechnung_Büro : Datenbank (Access 2007 - 2010)  -  Microsoft Access</h1>
          <div class="wins">
            <button aria-label="Minimieren">${draw(11, 11, svg`<path d="M0 5.500h11" stroke="#222"/>`)}</button>
            <button aria-label="Verkleinern">${draw(11, 11, svg`<rect x=".5" y="2.500" width="8" height="8" rx="1.500" fill="none" stroke="#222"/><path d="M3 .5h5a2 2 0 0 1 2 2v6" fill="none" stroke="#222"/>`)}</button>
            <button aria-label="Schließen">${draw(11, 11, svg`<path d="M.5.5l10 10M10.500.5l-10 10" stroke="#222"/>`)}</button>
          </div>
        </header>
        <nav class="tabs"><button class="file">Datei</button><button class="sel">Start</button><button>Erstellen</button><button>Externe Daten</button><button>Datenbanktools</button>
          <div class="r"><button aria-label="Menüband">${draw(9, 8, svg`<path d="M1 5.500L4.500 1.500 8 5.500a1.500 1.500 0 0 1-2 1.500L4.500 5.500 3 7A1.500 1.500 0 0 1 1 5.500z" fill="#fff" stroke="#4a4f58"/>`)}</button>
            <button aria-label="Hilfe">${draw(16, 16, svg`<circle cx="8" cy="8" r="7.500" fill="url(#gHelp)" stroke="#2a5aab"/><text x="4.500" y="12.500" font-size="12" font-weight="700" fill="#fff">?</text>`)}</button></div></nav>
        ${this.ribbon()}
        <div class="work">
          <aside class="nav">
            <div class="navhead"><span>Alle Access-Objekte</span><button aria-label="Filtermenü">${draw(14, 14, svg`<circle cx="7" cy="7" r="6" fill="#eceef2" stroke="#777c86"/><path d="M4 5.500h6L7 9.500z" fill="#44485a"/>`)}</button>
              <button aria-label="Einklappen">${draw(9, 8, svg`<path d="M4 .5L1 4l3 3.500M8 .5L5 4l3 3.500" fill="none" stroke="#3a3a3a" stroke-width="1.300"/>`)}</button></div>
            ${GROUPS.map((g) => html`<button class="gh">${g.title}${dblUp}</button>
              <ul class="list">${g.items.map((t) => html`<li><a href="#" class=${classMap({ hov: t === HOVERED })}>${g.icon}${t}</a></li>`)}</ul>`)}
          </aside>
          <div class="split"></div>
          <main class="doc">
            <div class="doctabs"><div class="doctab"><svg class="shape" width="134" height="23" viewBox="0 0 134 23"><path d="M.5 23V3.500a3 3 0 0 1 3-3H113c4 0 6 2 8 5l7 12c1 2 2 4.500 5 5.500" fill="url(#gTab)" stroke="#c49a68"/></svg>${iconForm}<span class="t">ErfassungSpesen</span></div>
              <button aria-label="Formular schließen">${draw(9, 9, svg`<path d="M1 1l7 7M8 1L1 8" stroke="#444" stroke-width="1.500"/>`)}</button></div>
            <div class="main">
              <div class="form">
                <div class="fhead">${logo}<h2>Spesenerfassung</h2></div>
                <div class="fbody"><div class="selcol">${draw(6, 11, svg`<path d="M0 0v11l6-5.500z" fill="#000"/>`)}</div>
                  <div class="canvas">
                    <div class="top">
                      <div class="fields">${FIELDS.map((f) => this.field(f))}</div>
                      <div class="btns"><button>Datensatz hinzufügen</button><button>Datensatz speichern</button><button>Datensatz löschen</button><button>Zurück zum Menue</button></div>
                      <div class="sub"><h3>Reisekosten</h3>
                        <div class="subform">
                          <div><div class="shead">${logo}<h2>Reisekosten</h2></div>
                            <div class="sbody"><div class="selcol">${draw(6, 11, svg`<path d="M0 0v11l6-5.500z" fill="#000"/>`)}</div>
                              <div class="sf">
                                <div class="r"><label class="l" for="s-land">Land:</label><div class="cb f"><select class="box" id="s-land"><option></option></select><span class="ar">${chevron}</span></div></div>
                                ${["Voll:", "Halb:", "Jahr:"].map((l) => html`<div class="r"><label class="l" for="s-${l[0]}">${l}</label><div class="f"><input class="box" id="s-${l[0]}" /></div></div>`)}
                              </div></div></div>
                          ${this.vscroll(68)}
                          ${this.recnav("sub", false)}
                          <div class="corner"></div>
                        </div></div>
                    </div>
                    <div class="sub-cap">Haupttabelle Abfrage Unterformular</div>
                    <div class="sheet"><div class="grid"><table>
                      <colgroup><col style="width:18px" />${COLS.map((c) => html`<col style=${styleMap({ width: `${c.w}px` })} />`)}</colgroup>
                      <thead><tr><th class="c0"><div class="h">${draw(11, 11, svg`<path d="M11 0v11H0z" fill="#f1f4fa" stroke="#cfd6e2"/>`)}</div></th>
                        ${COLS.map((c) => html`<th><div class="h"><span class="n">${c.name}</span>${c.sorted
                          ? draw(9, 9, svg`<path d="M0 3h5L2.500 6z" fill="#222"/><path d="M7 1v8M5 2.500L7 .5l2 2" stroke="#222" fill="none"/>`)
                          : draw(9, 4, svg`<path d="M1 0h5L3.500 3z" fill="#222"/>`)}</div></th>`)}</tr></thead>
                      <tbody><tr class="cur"><td class="c0"></td><td class="v">2101</td>${COLS.slice(1).map(() => html`<td></td>`)}</tr>
                        ${[0, 1, 2, 3, 4, 5].map(() => html`<tr><td class="c0"></td>${COLS.map(() => html`<td></td>`)}</tr>`)}</tbody></table></div>
                      ${this.recnav("sheet", false, this.hscroll(263))}
                    </div>
                  </div></div>
              </div>
              ${this.vscroll(74)}
              ${this.recnav("main", true, this.hscroll(72, true))}
              <div class="corner"></div>
            </div>
          </main>
        </div>
        <footer class="status"><span class="a">Formularansicht</span><span class="n">Num</span><span class="f">Filtered</span>
          <button class="on" aria-label="Formularansicht">${draw(13, 11, svg`<rect x=".5" y=".5" width="12" height="10" fill="#fdfdfd" stroke="#555"/><path d="M0 2h13" stroke="#555" stroke-width="2"/><path d="M2 5.500h3M2 8h3M7 5.500h4M7 8h4" stroke="#555"/>`)}</button>
          <button aria-label="Layoutansicht">${draw(11, 11, svg`<path d="M0 .5h3M8 .5h3M0 10.500h3M8 10.500h3M1.500 0v11M9.500 0v11M3 .5h5M3 10.500h5" stroke="#555"/><path d="M3.500 3.500h4v4h-4z" fill="#fff" stroke="#555"/><path d="M4 7l4-4" stroke="#555"/>`)}</button>
          <button aria-label="Entwurfsansicht">${draw(11, 11, svg`<path d="M1 1v7M1 2l5 5" stroke="#555" fill="none" stroke-width="1.400"/><path d="M0 9.500h10" stroke="#555" stroke-width="2" stroke-dasharray="2 1"/><path d="M10 1L5 7" stroke="#555" stroke-width="2"/>`)}</button></footer>
      </div>
      <div class="taskbar"><span class="start"></span><span class="pill">${draw(12, 12, svg`<path d="M0 9C2 4 6 1 11 0L8 9z" fill="#5cb2c4"/>`)}</span>
        ${TASKS.map((t, i) => html`<span class=${classMap({ task: true, cur: i === 20 })}>${draw(24, 20, t)}</span>`)}
        <span class="clock">15:32</span></div>`;
  }
}
